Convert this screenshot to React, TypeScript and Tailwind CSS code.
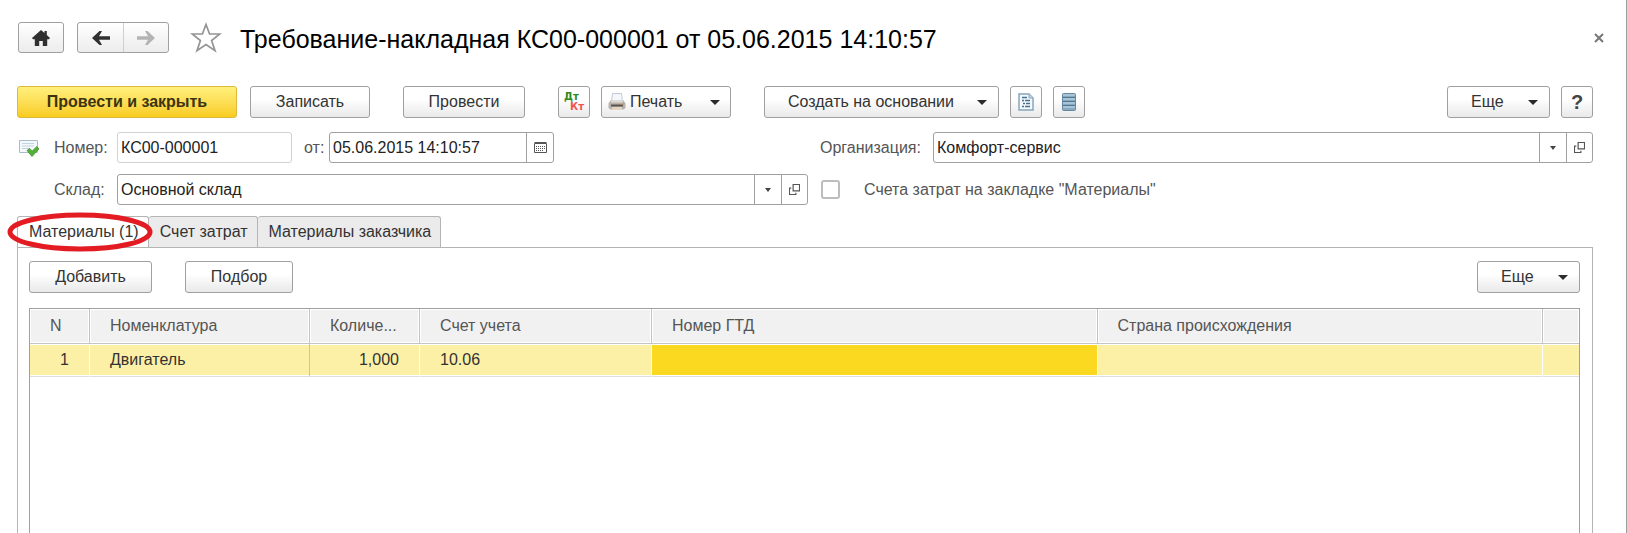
import type { ReactNode } from 'react'
import { clsx } from 'clsx'

const tabs = ['Материалы (1)', 'Счет затрат', 'Материалы заказчика']

const columns = [
  { title: 'N', width: 'w-[60px]' },
  { title: 'Номенклатура', width: 'w-[220px]' },
  { title: 'Количе...', width: 'w-[110px]' },
  { title: 'Счет учета', width: 'w-[232px]' },
  { title: 'Номер ГТД', width: '' },
  { title: 'Страна происхождения', width: '' },
  { title: '', width: 'w-9' },
]

function Button({ className, label, children }: { className?: string; label?: string; children: ReactNode }) {
  return (
    <button
      type="button"
      aria-label={label}
      className={clsx(
        'flex h-8 shrink-0 items-center rounded-[3px] border border-[#a0a0a0] bg-gradient-to-b from-white from-40% to-[#e9e9e9] whitespace-nowrap',
        className,
      )}
    >
      {children}
    </button>
  )
}

function Caret() {
  return (
    <svg className="h-[5px] w-[10px] shrink-0" viewBox="0 0 10 5" fill="#2b2b2b">
      <path d="M0 0h10L5 5z" />
    </svg>
  )
}

function MoreButton() {
  return (
    <Button className="w-[103px] justify-between pr-[11px] pl-[23px]">
      Еще
      <Caret />
    </Button>
  )
}

function OpenButton() {
  return (
    <button type="button" aria-label="Открыть" className="flex w-[26px] items-center justify-center border-l border-[#a0a0a0]">
      <svg className="h-[11px] w-[11px]" viewBox="0 0 12 12" fill="none" stroke="#555">
        <path d="M4.500 .5h7v7h-7zM2.500 4.500h-2v7h7v-2" strokeWidth="1.300" />
      </svg>
    </button>
  )
}

// Reference field: value list with an arrow and an "open" button
function SelectField({ id, value }: { id: string; value: string }) {
  return (
    <div className="flex h-[31px] flex-1 rounded-[3px] border border-[#a0a0a0] bg-white">
      <div className="grid flex-1">
        <select id={id} className="col-start-1 row-start-1 w-full appearance-none bg-transparent pl-[3px] text-[#222] outline-none">
          <option>{value}</option>
        </select>
        <span className="pointer-events-none col-start-1 row-start-1 flex w-[27px] items-center justify-center justify-self-end border-l border-[#a0a0a0]">
          <svg className="h-1 w-[6px]" viewBox="0 0 6 4" fill="#444">
            <path d="M0 0h6L3 4z" />
          </svg>
        </span>
      </div>
      <OpenButton />
    </div>
  )
}

function Header() {
  return (
    <header className="mt-[22px] flex h-[31px] items-center pr-[22px] pl-[18px]">
      <button
        type="button"
        aria-label="Начальная страница"
        className="flex h-[31px] w-[46px] items-center justify-center rounded-[3px] border border-[#a0a0a0] bg-gradient-to-b from-white to-[#ececec]"
      >
        <svg className="h-4 w-[18px]" viewBox="0 0 18 16" fill="#303030">
          <path d="M9 0L0 8l1 1.200h1.800V16h4.400v-5h3.600v5h4.400V9.200h1.800L18 8l-3.200-2.900V1h-2.300v2.100z" />
        </svg>
      </button>
      <div className="ml-[13px] flex h-[31px] rounded-[3px] border border-[#a0a0a0] bg-gradient-to-b from-white to-[#ececec]">
        <button type="button" aria-label="Назад" className="flex w-[46px] items-center justify-center border-r border-[#cfcfcf]">
          <svg className="h-[14px] w-[18px]" viewBox="0 0 18 14" fill="#303030">
            <path d="M0 7l7.500-7h2.500L7 5.200h11v3.600H7L10 14H7.500z" />
          </svg>
        </button>
        <button type="button" aria-label="Вперед" className="flex w-[44px] items-center justify-center">
          <svg className="h-[14px] w-[18px]" viewBox="0 0 18 14" fill="#b4b4b4">
            <path d="M18 7l-7.500-7H8l3 5.200H0v3.600h11L8 14h2.500z" />
          </svg>
        </button>
      </div>
      <button type="button" aria-label="В избранное" className="ml-[21px]">
        <svg className="h-[31px] w-8" viewBox="0 0 32 31" fill="none" stroke="#949494" strokeWidth="1.700">
          <path d="M16 2.500l3.600 9.500h10.200l-8.200 6.500 3.400 10.200L16 22.500l-9 6.200 3.400-10.200L2.200 12h10.200z" />
        </svg>
      </button>
      <h1 className="ml-[18px] pt-1 text-[25px] leading-[31px] text-black">Требование-накладная КС00-000001 от 05.06.2015 14:10:57</h1>
      <button type="button" aria-label="Закрыть" className="ml-auto">
        <svg className="h-[10px] w-[10px]" viewBox="0 0 10 10" stroke="#777" strokeWidth="2">
          <path d="M1 1l8 8M9 1L1 9" />
        </svg>
      </button>
    </header>
  )
}

function Toolbar() {
  return (
    <div className="mt-[33px] flex items-center pr-[33px] pl-[17px]">
      <button
        type="button"
        className="h-8 w-[220px] rounded-[3px] border border-[#dcb93a] bg-gradient-to-b from-[#fff07a] to-[#f9cc1b] font-bold text-[#3c3410]"
      >
        Провести и закрыть
      </button>
      <Button className="ml-[13px] w-[120px] justify-center">Записать</Button>
      <Button className="ml-[33px] w-[122px] justify-center">Провести</Button>
      <Button className="ml-[33px] w-8 justify-center" label="Движения документа">
        <span className="flex w-5 flex-col font-['DejaVu_Sans',sans-serif] text-[10px] leading-[10px] font-bold">
          <span className="text-left text-[#2f8a1c]">Дт</span>
          <span className="text-right text-[#f0524e]">Кт</span>
        </span>
      </Button>
      <Button className="ml-[11px] w-[130px] pr-[10px] pl-[6px]">
        <svg className="mr-1 h-[18px] w-[18px]" viewBox="0 0 18 18">
          <path d="M4.500 .5h9l1 8h-11z" fill="#f3f7fb" stroke="#b4bfca" strokeWidth=".8" />
          <path d="M2.500 7.500h13l2 3v4.500l-2 1.500h-13L.5 15v-4.500z" fill="#b9b2ab" />
          <path d="M3.500 7.500h11l.6 2H2.900z" fill="#dfdcd8" />
          <path d="M3 11.500h12v2H3z" fill="#5b554f" />
          <path d="M4 14h10v3H4z" fill="#e3d3c2" />
          <path d="M14 10.500h2v1h-2z" fill="#d78743" />
        </svg>
        <span className="mr-auto">Печать</span>
        <Caret />
      </Button>
      <Button className="ml-[33px] w-[235px] justify-between pr-[11px] pl-[23px]">
        Создать на основании
        <Caret />
      </Button>
      <Button className="ml-[11px] w-8 justify-center" label="Отчет">
        <svg className="h-[18px] w-4" viewBox="0 0 16 18">
          <path d="M1 1h10l4 4v12H1z" fill="#f4f9fd" stroke="#86a5ba" strokeWidth="1.500" />
          <path d="M11 1v4h4" fill="#c6d8e4" stroke="#86a5ba" />
          <path d="M4 4.500h5M4 7.500h2M7 7.500h5M5 10.500h2M8 10.500h4M4 13.500h2M7 13.500h5" stroke="#45718f" strokeWidth="1.400" />
        </svg>
      </Button>
      <Button className="ml-[11px] w-8 justify-center" label="Реестр">
        <svg className="h-[18px] w-[14px]" viewBox="0 0 14 18">
          <rect x=".5" y=".5" width="13" height="17" rx="1" fill="#88a9c0" stroke="#6488a0" />
          <path d="M1 2h12M1 6h12M1 10h12M1 14h12" stroke="#b4cddd" strokeWidth="1.500" />
          <path d="M1 4.500h12M1 8.500h12M1 12.500h12" stroke="#4f7893" />
        </svg>
      </Button>
      <div className="ml-auto flex gap-[11px]">
        <MoreButton />
        <Button className="w-8 justify-center text-[20px] font-bold text-[#444]">?</Button>
      </div>
    </div>
  )
}

function Fields() {
  return (
    <div className="mt-[14px] grid grid-cols-[791fr_773fr] gap-x-3 gap-y-[11px] pr-[33px] pl-[17px] text-[#555]">
      <div className="flex items-center">
        <svg className="ml-[2px] h-[18px] w-5" viewBox="0 0 20 18">
          <path d="M.5 1.500h18v12H.5z" fill="#f2f8fc" stroke="#a9bccb" />
          <path d="M3 4.500h12M3 7h12M3 9.500h8" stroke="#c3d3df" />
          <path d="M8 11.500l2.500-2 2.700 2.500L18 7.500l1.800 2.500-6.800 7.500z" fill="#53b139" stroke="#3d9428" strokeWidth=".8" />
        </svg>
        <label htmlFor="number" className="ml-[15px] w-[63px]">Номер:</label>
        <input id="number" readOnly value="КС00-000001" className="h-[31px] w-[175px] rounded-[3px] border border-[#d2d2d2] px-[3px] text-[#222] outline-none" />
        <label htmlFor="date" className="ml-3 w-[25px]">от:</label>
        <div className="flex h-[31px] w-[225px] rounded-[3px] border border-[#a0a0a0]">
          <input id="date" defaultValue="05.06.2015 14:10:57" className="min-w-0 flex-1 px-[3px] text-[#222] outline-none" />
          <button type="button" aria-label="Календарь" className="flex w-[27px] items-center justify-center border-l border-[#a0a0a0]">
            <svg className="h-[11px] w-[13px]" viewBox="0 0 13 11" fill="none" stroke="#555">
              <path d="M.5 1.500h12v9H.5zM.5 .5h12" />
              <path d="M2 4.500h9M2 6.500h9M2 8.500h7" strokeDasharray="1 1" />
            </svg>
          </button>
        </div>
      </div>
      <div className="flex items-center">
        <label htmlFor="organization" className="w-[113px]">Организация:</label>
        <SelectField id="organization" value="Комфорт-сервис" />
      </div>
      <div className="flex items-center pl-[37px]">
        <label htmlFor="warehouse" className="w-[63px]">Склад:</label>
        <SelectField id="warehouse" value="Основной склад" />
      </div>
      <div className="flex items-center">
        <input id="costs" type="checkbox" className="ml-px h-[19px] w-[19px] appearance-none rounded-[3px] border-2 border-[#bdbdbd] bg-white" />
        <label htmlFor="costs" className="ml-6">Счета затрат на закладке "Материалы"</label>
      </div>
    </div>
  )
}

function MaterialsTable() {
  return (
    <table className="w-full table-fixed border-separate border-spacing-0 text-left">
      <thead>
        <tr className="h-[35px] bg-[#f1f1f1] text-[#555]">
          {columns.map((column, i) => (
            <th
              key={i}
              className={clsx(
                'border-b border-b-[#c4c4c4] pl-5 font-normal shadow-[inset_0_0_0_1px_#fff]',
                i < columns.length - 1 && 'border-r border-r-[#c4c4c4]',
                column.width,
              )}
            >
              {column.title}
            </th>
          ))}
        </tr>
      </thead>
      <tbody>
        <tr className="h-[33px] bg-[#fcf0a6] [&>td]:border-b [&>td]:border-b-[#dedede] [&>td]:shadow-[inset_0_1px_#fff,inset_0_-1px_#fff]">
          <td className="border-r border-r-white pr-5 text-right">1</td>
          <td className="border-r border-r-[#c4c4c4] pl-5">Двигатель</td>
          <td className="border-r border-r-white pr-5 text-right">1,000</td>
          <td className="border-r border-r-white pl-5">10.06</td>
          <td className="border-r border-r-white bg-[#fbd920]" />
          <td className="border-r border-r-white" />
          <td />
        </tr>
      </tbody>
    </table>
  )
}

export default function App() {
  return (
    <div className="flex h-screen flex-col overflow-hidden border-r border-[#a0a0a0] bg-white font-['Liberation_Sans',sans-serif] text-[16px] leading-5 text-[#333]">
      <Header />
      <Toolbar />
      <Fields />

      <main className="mt-[11px] flex min-h-0 flex-1 flex-col pr-[33px] pl-[17px]">
        <div role="tablist" className="flex">
          {tabs.map((tab, i) => (
            <button
              key={tab}
              type="button"
              role="tab"
              aria-selected={i === 0}
              className={clsx(
                'relative h-[31px] rounded-t-[3px] border-t border-r border-[#b4b4b4] pr-[9px] pl-[11px]',
                i === 0 ? 'z-10 -mb-px border-l bg-white' : 'bg-[#ebebeb]',
              )}
            >
              {tab}
              {i === 0 && (
                <svg className="pointer-events-none absolute -top-[5px] -left-[11px] h-[40px] w-[146px]" viewBox="0 0 146 40" fill="none">
                  <ellipse cx="73" cy="20" rx="70" ry="17" stroke="#e31b23" strokeWidth="5" />
                </svg>
              )}
            </button>
          ))}
        </div>

        <section className="flex min-h-0 flex-1 flex-col border-x border-t border-[#b4b4b4] pt-[13px] pr-3 pl-[11px]">
          <div className="flex">
            <Button className="w-[123px] justify-center">Добавить</Button>
            <Button className="ml-[33px] w-[108px] justify-center">Подбор</Button>
            <div className="ml-auto">
              <MoreButton />
            </div>
          </div>
          <div className="mt-[15px] min-h-0 flex-1 border-x border-t border-[#a0a0a0]">
            <MaterialsTable />
          </div>
        </section>
      </main>
    </div>
  )
}
